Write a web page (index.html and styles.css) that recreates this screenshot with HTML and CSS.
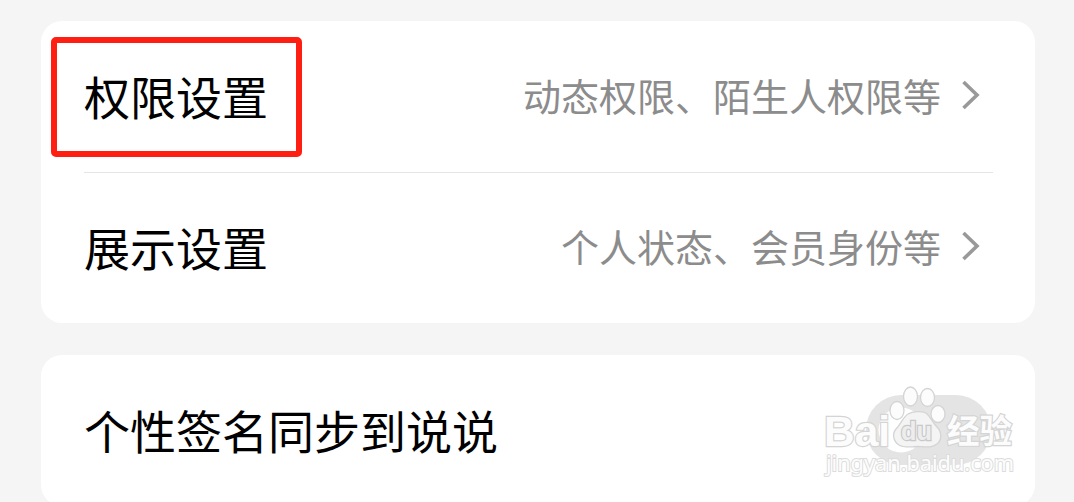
FILE: index.html
```
<!DOCTYPE html>
<html lang="zh-CN">
<head>
<meta charset="utf-8">
<title>权限设置</title>
<link rel="stylesheet" href="styles.css">
</head>
<body>
<main class="page">
  <section class="card">
    <div class="row">
      <span class="title">权限设置</span>
      <span class="hint">动态权限、陌生人权限等</span>
      <svg class="chevron" viewBox="0 0 20 32"><path d="M2.500 3 16 16 2.500 29"/></svg>
      <div class="highlight"></div>
    </div>
    <div class="divider"></div>
    <div class="row">
      <span class="title">展示设置</span>
      <span class="hint">个人状态、会员身份等</span>
      <svg class="chevron" viewBox="0 0 20 32"><path d="M2.500 3 16 16 2.500 29"/></svg>
    </div>
  </section>
  <section class="card">
    <div class="row">
      <span class="title">个性签名同步到说说</span>
    </div>
  </section>
  <svg class="watermark" viewBox="820 380 200 105">
    <rect class="pill" x="866" y="395" width="125" height="70" rx="35"/>
    <circle class="disc" cx="901" cy="430" r="22.500"/>
    <g class="mark">
      <text class="brand" x="824" y="445.500" textLength="66" lengthAdjust="spacingAndGlyphs">Bai</text>
      <path class="pad" d="M908 414C913 411 921 411 926 413C931 417 932 422 937 427C942 432 942 440 937 444C932 448 926 447 918 446.500C910 447 904 448 899 445C893 441 892 434 896 429C901 424 903 417 908 414Z"/>
      <ellipse cx="910.500" cy="396.500" rx="7" ry="9.500"/>
      <ellipse cx="927.500" cy="397.500" rx="7" ry="9"/>
      <ellipse cx="897" cy="410.500" rx="7" ry="9"/>
      <ellipse cx="938" cy="414" rx="7" ry="8.500"/>
      <text class="du" x="901" y="440" textLength="31" lengthAdjust="spacingAndGlyphs">du</text>
      <text class="name" x="947" y="443" textLength="65" lengthAdjust="spacingAndGlyphs">经验</text>
      <text class="url" x="826" y="471" textLength="188" lengthAdjust="spacingAndGlyphs">jingyan.baidu.com</text>
    </g>
  </svg>
</main>
</body>
</html>
```
FILE: styles.css
```
html, body {
  margin: 0;
  height: 100%;
  overflow: hidden;
}
.page {
  position: relative;
  box-sizing: border-box;
  height: 502px;
  padding: 21px 39px 0 41px;
  display: flex;
  flex-direction: column;
  gap: 32px;
  overflow: hidden;
  background: #f5f5f5;
  font-family: "Noto Sans CJK SC", sans-serif;
}
.card {
  flex: none;
  border-radius: 21px;
  background: #fff;
}
.row {
  position: relative;
  display: flex;
  align-items: center;
  box-sizing: border-box;
  height: 151px;
  padding: 0 54px 3px 43px;
}
.divider {
  height: 1px;
  margin: 0 42px -1px 43px;
  background: #e5e5e5;
}
.title {
  font-size: 46px;
  line-height: 60px;
  color: #000;
}
.hint {
  margin-left: auto;
  font-size: 38px;
  line-height: 50px;
  color: #8c8c8c;
}
.chevron {
  flex: none;
  width: 20px;
  height: 32px;
  margin-left: 20px;
}
.chevron path {
  fill: none;
  stroke: #999;
  stroke-width: 3.6;
}
.highlight {
  position: absolute;
  left: 10px;
  top: 16px;
  box-sizing: border-box;
  width: 251px;
  height: 120px;
  border: 6px solid #ff1e12;
  border-radius: 5px;
}
.watermark {
  position: absolute;
  left: 820px;
  top: 380px;
  width: 200px;
  height: 105px;
}
.pill {
  fill: #e4e4e4;
}
.disc {
  fill: #fff;
}
.mark {
  fill: #fcfcfc;
  stroke: #d4d4d4;
  stroke-width: 1.3;
}
.mark .pad {
  fill: #f4f4f4;
}
.mark text {
  paint-order: stroke;
  stroke-width: 2.4;
}
.brand, .du {
  font-family: "Liberation Sans", Arial, sans-serif;
  font-weight: bold;
  font-size: 42px;
}
.mark .du {
  font-size: 25px;
  fill: #ededed;
  stroke: #c8c8c8;
}
.name {
  font-size: 33px;
  font-weight: 700;
}
.mark .url {
  font-family: "Noto Sans", sans-serif;
  font-size: 22px;
  stroke: #dcdcdc;
  stroke-width: 2;
}
```
